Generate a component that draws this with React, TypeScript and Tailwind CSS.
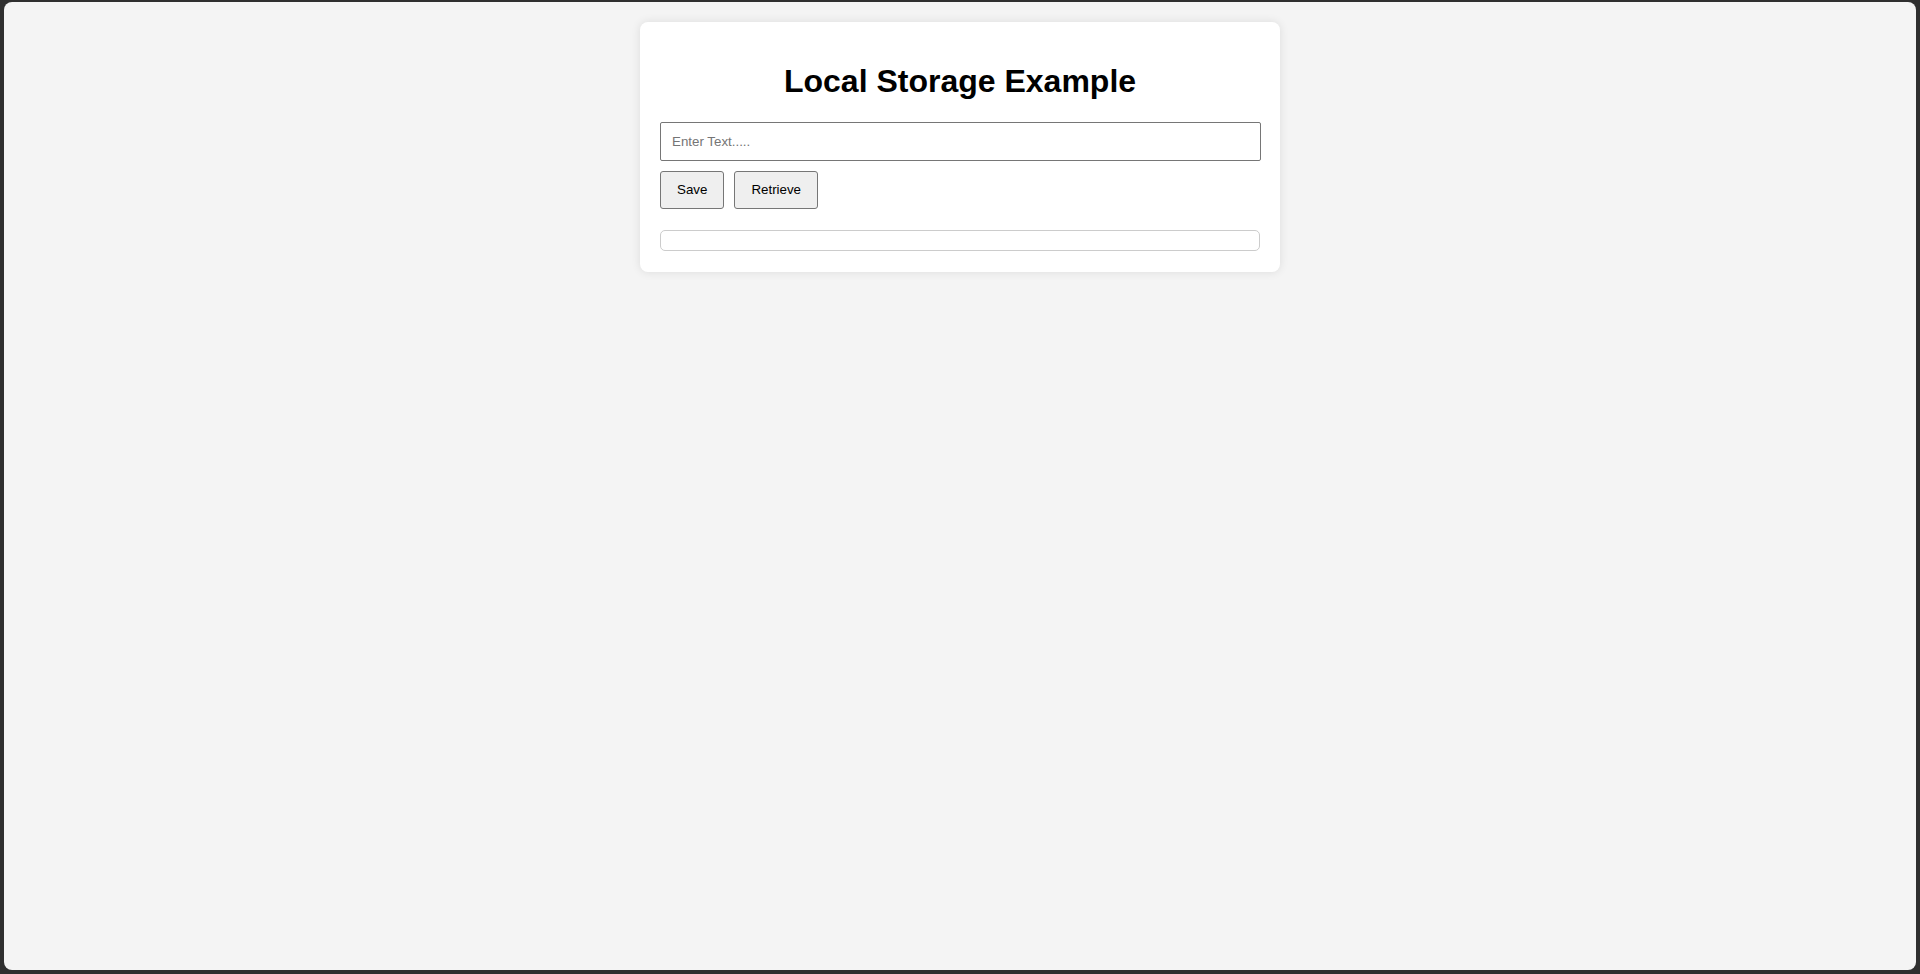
import { useState } from 'react';

export default function App() {
  const [text, setText] = useState('');
  const [output, setOutput] = useState('');

  // store and read back the value from localStorage
  const save = () => {
    try {
      localStorage.setItem('text', text);
    } catch {}
  };
  const retrieve = () => {
    try {
      setOutput(localStorage.getItem('text') ?? '');
    } catch {}
  };

  return (
    <div className="flex h-[974px] w-full flex-col bg-[#2f2f2f] px-[4px] pt-[2px] pb-[4px] font-['Liberation_Sans',Arial,sans-serif]">
      <div className="flex flex-1 justify-center rounded-lg bg-[#f4f4f4] pt-5">
        <div className="h-fit w-[640px] rounded-lg bg-white px-5 pt-5 pb-[21px] shadow-[0_0_10px_rgba(0,0,0,0.1)]">
          <h1 className="my-[21.44px] text-center text-[32px] leading-[normal] font-bold text-black">
            Local Storage Example
          </h1>
          <input
            type="text"
            value={text}
            onChange={(e) => setText(e.target.value)}
            placeholder="Enter Text....."
            className="block h-[39px] w-[601px] rounded-[2px] border border-[#767676] bg-white px-[11px] text-[13.33px] text-black placeholder:text-[#757575] outline-none"
          />
          <div className="mt-[10px] flex gap-[10px]">
            <button
              onClick={save}
              className="h-[38px] rounded-[3px] border border-[#767676] bg-[#efefef] px-4 text-[13.33px] text-black"
            >
              Save
            </button>
            <button
              onClick={retrieve}
              className="h-[38px] rounded-[3px] border border-[#767676] bg-[#efefef] px-4 text-[13.33px] text-black"
            >
              Retrieve
            </button>
          </div>
          <div className="mt-[21px] h-[21px] w-[600px] rounded-[5px] border border-[#cccccc] px-2 text-[13.33px] leading-[19px]">
            {output}
          </div>
        </div>
      </div>
    </div>
  );
}
